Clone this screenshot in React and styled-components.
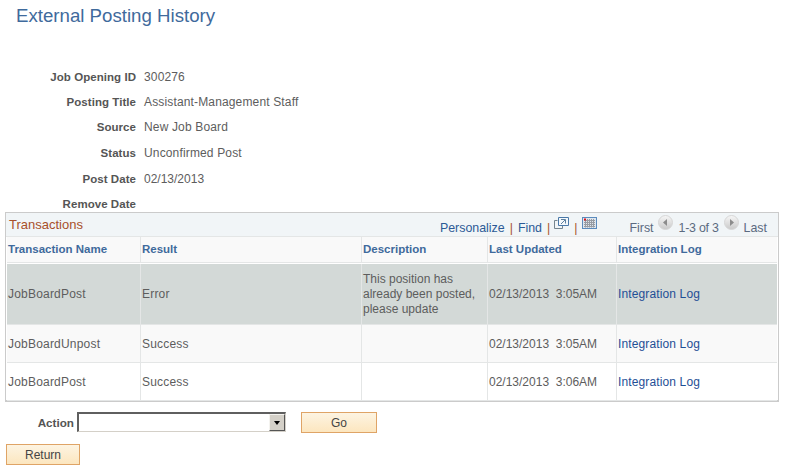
import React from "react"
import styled, { createGlobalStyle } from "styled-components"

const GlobalStyle = createGlobalStyle`
  html, body { margin: 0; padding: 0; background: #fff; }
  body { font-family: "Liberation Sans", Arial, sans-serif; font-size: 12px; color: #5d5d5d; }
`

const Page = styled.div`
  width: 790px;
  height: 473px;
  overflow: hidden;
  padding: 5px 0 0 5px;
  box-sizing: border-box;
`

const Title = styled.h1`
  margin: 0 0 0 11px;
  height: 22px;
  line-height: 22px;
  font-size: 18.67px;
  font-weight: normal;
  color: #3f6a9c;
`

const Details = styled.dl`
  margin: 37px 0 0;
  display: grid;
  grid-template-columns: 131px 1fr;
  column-gap: 8px;
  grid-template-rows: 26px 24px 26px 26px 26px 24px;
  align-items: center;
`

const Label = styled.dt`
  text-align: right;
  font-size: 11.5px;
  letter-spacing: 0.05px;
  font-weight: bold;
  color: #555;
`

const Value = styled.dd`
  margin: 0;
  color: #5d5d5d;
  letter-spacing: ${p => (p.$plain ? 0 : 0.15)}px;
`

const Grid = styled.div`
  width: 774px;
  height: 190px;
  margin-top: -4px;
  box-sizing: border-box;
  border: 1px solid #cbcbcb;
  border-bottom-width: 2px;
  background: #fff;
`

const GridBar = styled.div`
  height: 24px;
  display: flex;
  align-items: center;
  padding: 0 11px 0 3px;
  background: #f1f5f7;
  border-bottom: 1px solid #e4e6e6;
  box-sizing: border-box;
`

const GridTitle = styled.span`
  font-size: 13px;
  color: #a8502b;
  flex: 1;
`

const Nav = styled.div`
  display: flex;
  align-items: center;
  font-size: 12.4px;
  padding-top: 6px;
  white-space: nowrap;
`

const NavLink = styled.span`
  color: ${p => (p.$muted ? "#5b6a80" : "#2c5a96")};
`

const Counter = styled(NavLink)`
  letter-spacing: -0.25px;
`

const Sep = styled.span`
  color: #a8502b;
  margin: 0 5px;
`

const Pager = styled.div`
  display: flex;
  align-items: center;
  margin-left: 32px;
`

const PopoutSvg = styled.svg`
  width: 15px;
  height: 12px;
  margin: -9px 0 0 -1px;
`

const ChartSvg = styled.svg`
  width: 15px;
  height: 12px;
  margin-top: -9px;
`

const ArrowSvg = styled.svg`
  width: 15px;
  height: 15px;
  margin: -10px ${p => (p.$dir === "left" ? "6px" : "5px")} 0 ${p => (p.$dir === "left" ? "4px" : "5px")};
`

const Row = styled.div`
  display: grid;
  grid-template-columns: 134px 221px 126px 129px 1fr;
  height: ${p => p.$h}px;
  margin: ${p => p.$mt || 0}px 1px 0;
  background: ${p => p.$bg || "#fff"};
  border-bottom: 1px solid #e4e6e6;
  box-sizing: border-box;
`

const Cell = styled.div`
  display: flex;
  align-items: center;
  padding: ${p => p.$pt ?? 2}px 0 0 1px;
  border-right: 1px solid #e4e6e6;
  color: #5d5d5d;
  line-height: 15px;
  white-space: ${p => (p.$pre ? "pre" : "normal")};
  letter-spacing: ${p => p.$ls || 0}px;
  &:last-child { border-right: 0; }
`

const HeadCell = styled(Cell)`
  font-size: 11.5px;
  font-weight: bold;
  color: #3f6a9c;
`

const LogLink = styled.a`
  color: #1f4f96;
  text-decoration: none;
  letter-spacing: 0.13px;
`

const ActionRow = styled.div`
  display: flex;
  align-items: center;
  margin-top: 10px;
  height: 21px;
`

const ActionLabel = styled.span`
  width: 69px;
  margin-right: 3px;
  text-align: right;
  font-size: 11.7px;
  font-weight: bold;
  color: #555;
`

const Select = styled.div`
  width: 209px;
  height: 20px;
  align-self: flex-start;
  box-sizing: border-box;
  border-top: 2px solid #5f5f5f;
  border-left: 2px solid #5f5f5f;
  border-right: 1px solid #d4d0c8;
  border-bottom: 1px solid #d4d0c8;
  background: #fff;
  display: flex;
  justify-content: flex-end;
`

const SelectArrow = styled.div`
  width: 16px;
  background: #d4d0c8;
  border: 1px solid;
  border-color: #f4f3ef #555 #555 #f4f3ef;
  box-sizing: border-box;
  display: flex;
  align-items: center;
  justify-content: center;
  &::after {
    content: "";
    border-style: solid;
    border-width: 4px 3.5px 0;
    border-color: #000 transparent transparent;
  }
`

const Button = styled.button`
  width: ${p => p.$w}px;
  height: 21px;
  margin-left: ${p => p.$ml || 0}px;
  padding: 1px 0 0;
  border: 1px solid #dfa466;
  background: linear-gradient(#fdf4e2, #fce6bf);
  font-family: inherit;
  font-size: 12px;
  color: #444;
`

const ReturnRow = styled.div`
  margin: 11px 0 0 1px;
`

const PopoutIcon = () => (
  <PopoutSvg viewBox="0 0 15 12" fill="none">
    <path d="M3.5 3.5H.5v8h8V9" stroke="#75858f" />
    <path d="M4.5.5h10v8h-10z" stroke="#4a78a8" fill="#f4f8fb" />
    <path d="M7 2.5h4.5V6.5M11 3L7 7" stroke="#5c7f9f" />
  </PopoutSvg>
)

const ChartIcon = () => (
  <ChartSvg viewBox="0 0 15 12">
    <rect x=".5" y=".5" width="14" height="11" fill="#dfe6ee" stroke="#5b8bbd" />
    <path d="M2 3.5h11M2 5.5h11M2 7.5h11M2 9.5h11M3.5 2v8.5M5.5 2v8.5M7.5 2v8.5M9.5 2v8.5M11.5 2v8.5" stroke="#979ca3" />
    <rect x="2" y="1.5" width="2" height="2" fill="#e0101a" />
  </ChartSvg>
)

const RoundArrow = ({ dir }) => (
  <ArrowSvg $dir={dir} viewBox="0 0 15 15">
    <defs>
      <linearGradient id={`g-${dir}`} x1="0" y1="0" x2="0" y2="1">
        <stop offset="0" stopColor="#f7f7f7" />
        <stop offset="1" stopColor="#c9c9c9" />
      </linearGradient>
    </defs>
    <circle cx="7.5" cy="7.5" r="7" fill={`url(#g-${dir})`} stroke="#d6d6d6" />
    <path d={dir === "left" ? "M9 4v7L5 7.5z" : "M6 4v7l4-3.5z"} fill="#8c8c8c" />
  </ArrowSvg>
)

const details = [
  ["Job Opening ID", "300276"],
  ["Posting Title", "Assistant-Management Staff"],
  ["Source", "New Job Board"],
  ["Status", "Unconfirmed Post"],
  ["Post Date", "02/13/2013", true],
  ["Remove Date", ""],
]

const rows = [
  { name: "JobBoardPost", result: "Error", desc: "This position has already been posted, please update", date: "02/13/2013  3:05AM", h: 61, mt: 1, pt: 0, bg: "#d3d9d7" },
  { name: "JobBoardUnpost", result: "Success", desc: "", date: "02/13/2013  3:05AM", h: 38, bg: "#f9f9f9" },
  { name: "JobBoardPost", result: "Success", desc: "", date: "02/13/2013  3:06AM", h: 38, bg: "#fff" },
]

const headers = ["Transaction Name", "Result", "Description", "Last Updated", "Integration Log"]

const App = () => {
  return (
    <>
      <GlobalStyle />
      <Page>
        <Title>External Posting History</Title>
        <Details>
          {details.map(([label, value, plain]) => (
            <React.Fragment key={label}>
              <Label>{label}</Label>
              <Value $plain={plain}>{value}</Value>
            </React.Fragment>
          ))}
        </Details>
        <Grid>
          <GridBar>
            <GridTitle>Transactions</GridTitle>
            <Nav>
              <NavLink>Personalize</NavLink>
              <Sep>|</Sep>
              <NavLink>Find</NavLink>
              <Sep>|</Sep>
              <PopoutIcon />
              <Sep>|</Sep>
              <ChartIcon />
              <Pager>
                <NavLink $muted>First</NavLink>
                <RoundArrow dir="left" />
                <Counter $muted>1-3 of 3</Counter>
                <RoundArrow dir="right" />
                <NavLink $muted>Last</NavLink>
              </Pager>
            </Nav>
          </GridBar>
          <Row $h={26} $bg="#f9f9f9">
            {headers.map(h => <HeadCell key={h} $pt={0}>{h}</HeadCell>)}
          </Row>
          {rows.map((r, i) => (
            <Row key={i} $h={r.h} $mt={r.mt} $bg={r.bg}>
              <Cell $pt={r.pt} $ls={0.2}>{r.name}</Cell>
              <Cell $pt={r.pt} $ls={0.2}>{r.result}</Cell>
              <Cell $pt={r.pt}>{r.desc}</Cell>
              <Cell $pt={r.pt} $pre>{r.date}</Cell>
              <Cell $pt={r.pt}><LogLink href="#">Integration Log</LogLink></Cell>
            </Row>
          ))}
        </Grid>
        <ActionRow>
          <ActionLabel>Action</ActionLabel>
          <Select><SelectArrow /></Select>
          <Button $w={76} $ml={15}>Go</Button>
        </ActionRow>
        <ReturnRow>
          <Button $w={74}>Return</Button>
        </ReturnRow>
      </Page>
    </>
  )
}

export default App
